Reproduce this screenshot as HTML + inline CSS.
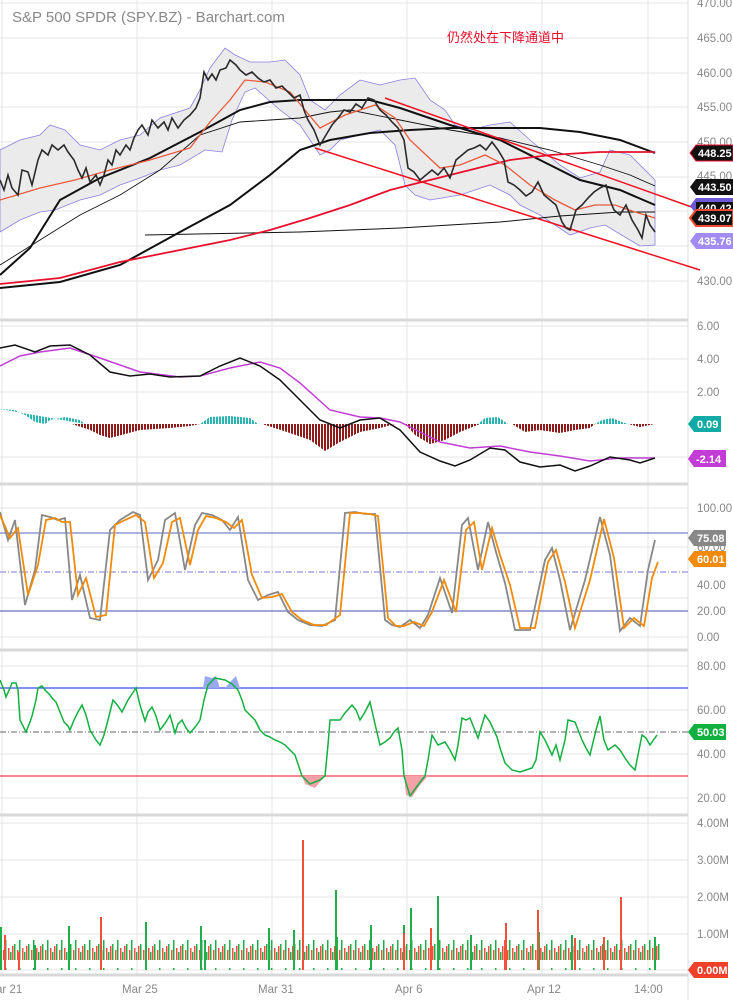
<!DOCTYPE html><html><head><meta charset="utf-8"><style>
body{margin:0;background:#fff;width:733px;height:1000px;overflow:hidden;font-family:"Liberation Sans","Noto Sans CJK SC",sans-serif}
svg{position:absolute;left:0;top:0}
.ax{font-size:11.5px;fill:#888;font-family:"Liberation Sans",sans-serif}
.tg{font-size:11px;font-weight:bold;fill:#fff;font-family:"Liberation Sans",sans-serif}
</style></head><body>
<svg width="733" height="1000" viewBox="0 0 733 1000">
<defs>
<pattern id="vol" x="0" y="0" width="14" height="30" patternUnits="userSpaceOnUse">
<rect x="0" y="14" width="1.5" height="16" fill="#1fae4a"/><rect x="3" y="20" width="1.5" height="10" fill="#f2503a"/><rect x="5" y="8" width="1.5" height="22" fill="#1fae4a"/><rect x="8" y="18" width="1.5" height="12" fill="#f2503a"/><rect x="10" y="22" width="1.5" height="8" fill="#1fae4a"/><rect x="12" y="16" width="1.5" height="14" fill="#f2503a"/>
</pattern>
<pattern id="hist" width="3" height="10" patternUnits="userSpaceOnUse"><rect width="2" height="10" fill="#8e1a1a"/></pattern>
<pattern id="histg" width="3" height="10" patternUnits="userSpaceOnUse"><rect width="2" height="10" fill="#2ab5b0"/></pattern>
</defs>
<g stroke="#e4e4e4" stroke-width="1">
<line x1="2" y1="0" x2="2" y2="975"/><line x1="137" y1="0" x2="137" y2="975"/><line x1="272" y1="0" x2="272" y2="975"/><line x1="407" y1="0" x2="407" y2="975"/><line x1="542" y1="0" x2="542" y2="975"/><line x1="648" y1="0" x2="648" y2="975"/>
<line x1="0" y1="3" x2="688" y2="3"/><line x1="0" y1="38" x2="688" y2="38"/><line x1="0" y1="73" x2="688" y2="73"/><line x1="0" y1="107" x2="688" y2="107"/><line x1="0" y1="142" x2="688" y2="142"/><line x1="0" y1="177" x2="688" y2="177"/><line x1="0" y1="211" x2="688" y2="211"/><line x1="0" y1="246" x2="688" y2="246"/><line x1="0" y1="281" x2="688" y2="281"/>
<line x1="0" y1="326" x2="688" y2="326"/><line x1="0" y1="359" x2="688" y2="359"/><line x1="0" y1="392" x2="688" y2="392"/><line x1="0" y1="457" x2="688" y2="457"/>
<line x1="0" y1="508" x2="688" y2="508"/><line x1="0" y1="547" x2="688" y2="547"/><line x1="0" y1="598" x2="688" y2="598"/><line x1="0" y1="637" x2="688" y2="637"/>
<line x1="0" y1="666" x2="688" y2="666"/><line x1="0" y1="710" x2="688" y2="710"/><line x1="0" y1="754" x2="688" y2="754"/><line x1="0" y1="798" x2="688" y2="798"/>
<line x1="0" y1="823" x2="688" y2="823"/><line x1="0" y1="860" x2="688" y2="860"/><line x1="0" y1="897" x2="688" y2="897"/><line x1="0" y1="934" x2="688" y2="934"/><line x1="0" y1="970" x2="688" y2="970"/>
</g>
<g stroke="#d8d8d8" stroke-width="3"><line x1="0" y1="320" x2="688" y2="320"/><line x1="0" y1="484" x2="688" y2="484"/><line x1="0" y1="650" x2="688" y2="650"/><line x1="0" y1="815" x2="688" y2="815"/><line x1="0" y1="975" x2="688" y2="975"/></g>
<line x1="688" y1="0" x2="688" y2="1000" stroke="#ddd"/>
<!-- price panel -->
<polygon fill="#ebebeb" stroke="#8a80e0" stroke-width="0.8" points="0,150 20,140 40,135 50,125 65,130 80,145 100,150 120,140 140,135 160,118 190,108 200,90 210,68 225,48 235,55 250,62 270,62 285,60 300,75 310,100 325,110 340,95 360,80 380,85 400,80 415,78 430,100 445,110 455,125 470,130 490,125 510,122 530,140 560,165 580,178 600,172 610,150 630,155 655,180 655,245 640,246 630,240 605,225 590,228 570,235 540,215 520,205 510,195 490,185 460,195 430,200 415,195 405,185 395,145 380,130 360,135 340,140 330,150 320,155 300,125 280,110 255,88 245,92 232,120 222,152 205,150 180,165 160,170 140,178 120,185 100,195 80,200 55,210 40,212 20,220 0,232"/>
<polyline fill="none" stroke="#111" stroke-width="1" points="145,235 300,232 400,228 500,222 560,216 620,212 655,212"/>
<polyline fill="none" stroke="#111" stroke-width="0.9" points="0,265 40,240 80,215 120,195 160,170 200,135 240,122 270,120 300,118 330,112 350,110 400,120 450,130 500,138 550,150 600,165 630,175 655,186"/>
<polyline fill="none" stroke="#111" stroke-width="2" points="0,275 30,248 60,200 100,178 150,158 200,132 240,110 270,102 300,100 340,100 370,100 400,108 450,125 500,140 540,160 580,180 620,190 655,205"/>
<polyline fill="none" stroke="#111" stroke-width="2" points="0,288 60,282 120,265 180,232 230,205 270,175 300,150 330,140 370,133 410,130 450,128 500,128 540,128 580,132 620,140 655,153"/>
<polyline fill="none" stroke="#e8102c" stroke-width="1.8" points="0,284 60,278 120,262 180,250 230,240 270,230 310,218 350,205 390,190 430,180 470,170 510,160 550,155 600,152 655,152"/>
<line x1="315" y1="148" x2="700" y2="270" stroke="#f01020" stroke-width="1.5"/>
<line x1="385" y1="98" x2="700" y2="210" stroke="#f01020" stroke-width="1.5"/>
<polyline fill="none" stroke="#e85a3a" stroke-width="1.3" points="0,200 40,188 75,180 110,170 150,160 190,148 210,122 230,100 245,80 265,82 290,92 305,110 320,128 345,115 375,105 395,118 410,140 440,168 460,165 485,155 505,165 530,185 555,200 575,210 595,205 615,205 635,212 655,218"/>
<polyline fill="none" stroke="#2a2a2a" stroke-width="1.6" points="0,180 4,190 8,175 12,188 18,195 22,170 28,172 32,185 38,160 42,150 48,155 52,145 58,150 64,145 68,152 74,160 78,170 82,178 86,168 90,182 96,175 100,185 104,175 108,160 112,165 116,150 120,155 126,145 130,150 134,138 138,130 142,125 148,135 152,120 158,128 164,122 168,130 172,118 178,128 184,120 190,115 196,108 200,98 204,72 208,80 212,74 216,80 220,70 226,68 230,60 236,65 240,70 246,75 252,72 258,78 264,82 270,80 276,88 282,86 288,92 294,98 300,95 304,110 308,120 314,130 320,145 326,135 332,125 338,118 344,110 350,112 356,104 362,108 368,98 374,100 380,110 386,115 392,122 398,128 404,140 408,168 414,172 420,180 426,175 432,170 438,175 444,168 450,178 456,160 462,155 468,150 474,148 480,145 486,150 492,142 498,150 504,160 508,182 514,185 520,190 526,196 532,192 538,182 544,195 550,200 556,205 562,222 566,228 570,230 576,210 582,205 588,198 594,192 600,188 606,185 610,200 614,210 620,215 626,205 632,220 638,230 642,238 646,215 650,225 655,232"/>
<!-- macd -->
<polygon fill="url(#histg)" points="0,409 15,410 25,415 35,422 45,424 50,420 65,417 80,420 85,424"/>
<polygon fill="url(#histg)" points="200,424 210,417 230,416 250,418 258,424"/>
<polygon fill="url(#histg)" points="478,424 485,418 498,417 508,424"/>
<polygon fill="url(#histg)" points="595,424 602,420 612,418 622,422 628,424"/>
<polygon fill="url(#hist)" points="72,424 90,430 100,435 110,438 125,434 140,430 170,428 190,426 200,424"/>
<polygon fill="url(#hist)" points="262,424 290,433 310,440 325,451 340,442 360,432 380,428 395,424"/>
<polygon fill="url(#hist)" points="405,424 415,435 430,444 445,440 460,432 470,428 480,424"/>
<polygon fill="url(#hist)" points="512,424 525,432 540,430 560,433 575,430 590,428 595,424"/>
<polygon fill="url(#hist)" points="628,424 640,427 655,424"/>
<polyline fill="none" stroke="#c23cd6" stroke-width="1.5" points="0,366 20,356 40,352 70,348 100,358 140,372 180,377 200,376 230,368 260,362 280,368 300,383 330,410 360,417 380,418 400,422 420,432 440,442 470,448 500,446 530,452 560,456 590,461 620,458 655,458"/>
<polyline fill="none" stroke="#111" stroke-width="1.5" points="0,348 15,345 35,352 50,346 70,345 90,355 110,372 130,376 150,374 170,377 200,376 220,366 240,358 260,366 280,380 300,400 320,420 340,428 360,420 380,418 400,430 420,452 440,461 455,466 470,460 490,448 505,450 520,462 540,467 560,465 575,471 590,466 610,457 630,460 640,463 655,458"/>
<!-- stoch -->
<line x1="0" y1="533" x2="688" y2="533" stroke="#8e98d8" stroke-width="1.5"/>
<line x1="0" y1="611" x2="688" y2="611" stroke="#6870c8" stroke-width="1.2"/>
<line x1="0" y1="572" x2="688" y2="572" stroke="#7a7ae0" stroke-dasharray="6 2 1 2"/>
<polyline fill="none" stroke="#888" stroke-width="1.8" points="0,512 8,540 15,520 25,605 35,570 42,515 50,517 58,520 65,518 72,600 80,575 90,618 100,620 110,530 120,520 133,512 140,515 148,580 158,560 165,520 175,513 185,570 195,525 202,513 212,515 222,520 230,530 238,517 248,580 258,600 268,595 278,592 288,612 298,620 310,625 322,626 335,620 345,513 355,512 365,514 375,514 385,620 392,625 400,627 410,620 420,628 428,615 440,578 452,613 462,525 468,518 478,570 488,522 496,552 505,583 515,630 530,630 545,560 552,548 560,580 570,630 585,580 600,517 610,555 620,631 630,618 640,626 648,570 655,540"/>
<polyline fill="none" stroke="#f28a0a" stroke-width="1.8" points="0,515 10,538 18,528 28,595 38,565 46,520 55,518 62,522 70,522 78,595 86,578 96,617 106,615 115,525 125,520 136,515 145,522 154,578 163,563 172,522 180,518 190,565 198,530 206,516 216,518 226,522 234,528 242,520 252,575 262,598 272,597 282,594 292,612 302,620 314,625 326,625 340,615 350,513 360,513 370,514 378,516 388,618 396,626 404,626 414,622 424,626 432,612 444,580 456,612 466,530 474,522 482,570 492,528 500,555 510,585 520,628 535,628 548,562 556,550 565,582 575,628 590,580 604,519 614,558 624,628 634,618 644,626 652,578 658,562"/>
<!-- rsi -->
<line x1="0" y1="688" x2="688" y2="688" stroke="#3550f0" stroke-width="1.2"/>
<line x1="0" y1="776" x2="688" y2="776" stroke="#f04050" stroke-width="1.2"/>
<line x1="0" y1="732" x2="688" y2="732" stroke="#333" stroke-dasharray="6 2 1 2" stroke-width="0.8"/>
<polygon fill="#9aa8f0" points="203,688 205,676 212,678 216,676 220,688 225,688 232,680 236,676 240,688"/>
<polygon fill="#f6a0a8" points="302,776 305,784 315,788 325,776"/>
<polygon fill="#f6a0a8" points="404,776 406,795 412,797 420,785 428,776"/>
<polyline fill="none" stroke="#12b040" stroke-width="1.5" points="0,680 4,690 6,697 10,688 12,683 16,683 18,690 20,720 24,728 26,732 30,722 32,716 36,700 38,688 42,686 45,690 50,695 52,698 56,702 60,712 64,722 68,726 70,730 74,720 78,712 82,705 86,715 90,730 96,740 100,745 104,735 108,720 113,700 118,706 122,712 128,700 132,694 136,688 140,705 145,721 148,712 152,707 156,716 160,730 166,722 170,715 175,733 178,724 182,720 186,728 190,733 196,726 200,720 204,700 208,685 215,678 225,680 232,684 238,690 242,700 245,710 250,715 255,720 260,730 265,735 270,737 275,740 280,742 285,745 290,750 295,755 300,770 302,776 310,784 320,780 325,776 328,745 330,720 335,720 340,720 345,713 352,705 356,710 360,720 365,712 370,702 375,724 380,745 385,742 390,738 394,732 398,728 402,750 404,776 410,796 418,785 425,776 428,760 432,735 438,745 445,742 450,750 455,760 458,745 462,718 466,720 470,718 474,728 478,738 485,715 490,722 497,737 500,748 505,763 512,770 520,772 526,770 532,768 536,760 540,732 545,740 552,755 556,745 560,760 565,740 568,720 575,722 582,740 586,748 590,755 596,730 600,716 604,740 608,750 615,745 620,750 625,758 630,765 635,770 638,755 642,735 646,738 650,745 657,735"/>
<!-- volume -->
<rect x="0" y="940" width="660" height="30" fill="url(#vol)"/>
<g fill="#1fae4a">
<rect x="0" y="927" width="2" height="43"/><rect x="34" y="945" width="2" height="25"/><rect x="68" y="926" width="2" height="44"/><rect x="145" y="922" width="2" height="48"/><rect x="204" y="940" width="2" height="30"/><rect x="268" y="928" width="2" height="42"/><rect x="336" y="937" width="2" height="33"/><rect x="403" y="925" width="2" height="45"/><rect x="410" y="908" width="2" height="62"/><rect x="470" y="935" width="2" height="35"/><rect x="538" y="932" width="2" height="38"/><rect x="335" y="890" width="2" height="80"/><rect x="437" y="896" width="2" height="74"/><rect x="370" y="925" width="2" height="45"/><rect x="571" y="935" width="2" height="35"/><rect x="654" y="937" width="2" height="33"/><rect x="200" y="926" width="2" height="44"/><rect x="293" y="930" width="2" height="40"/>
</g>
<g fill="#f2503a">
<rect x="4" y="935" width="2" height="35"/><rect x="18" y="952" width="2" height="18"/><rect x="100" y="917" width="2" height="53"/><rect x="302" y="840" width="2" height="130"/><rect x="403" y="933" width="2" height="37"/><rect x="430" y="946" width="2" height="24"/><rect x="504" y="940" width="2" height="30"/><rect x="537" y="910" width="2" height="60"/><rect x="603" y="937" width="2" height="33"/><rect x="620" y="897" width="2" height="73"/><rect x="430" y="928" width="2" height="42"/><rect x="505" y="923" width="2" height="47"/><rect x="574" y="938" width="2" height="32"/>
</g>
<!-- axis labels -->
<g class="ax" text-anchor="start">
<text x="697" y="7">470.00</text><text x="697" y="42">465.00</text><text x="697" y="77">460.00</text><text x="697" y="111">455.00</text><text x="697" y="146">450.00</text><text x="697" y="180">445.00</text><text x="697" y="285">430.00</text>
<text x="697" y="330">6.00</text><text x="697" y="363">4.00</text><text x="697" y="396">2.00</text>
<text x="697" y="512">100.00</text><text x="697" y="551">60.00</text><text x="697" y="589">40.00</text><text x="697" y="615">20.00</text><text x="697" y="641">0.00</text>
<text x="697" y="670">80.00</text><text x="697" y="714">60.00</text><text x="697" y="758">40.00</text><text x="697" y="802">20.00</text>
<text x="697" y="827">4.00M</text><text x="697" y="864">3.00M</text><text x="697" y="901">2.00M</text><text x="697" y="938">1.00M</text>
</g>
<g class="ax" font-size="12"><text x="-4" y="993">ar 21</text><text x="122" y="993">Mar 25</text><text x="258" y="993">Mar 31</text><text x="395" y="993">Apr 6</text><text x="527" y="993">Apr 12</text><text x="634" y="993">14:00</text></g>
<!-- tags -->
<polygon fill="#111" stroke="#e8102c" points="690,153 696,145 733,145 733,161 696,161"/><text class="tg" x="698" y="157">448.25</text>
<polygon fill="#111" points="690,187 696,179 733,179 733,195 696,195"/><text class="tg" x="698" y="191">443.50</text>
<polygon fill="#6a58d8" points="690,206 696,198 733,198 733,214 696,214"/><polygon fill="#111" points="696,202 733,202 733,212 696,212"/><text class="tg" x="698" y="212">440.42</text>
<polygon fill="#111" stroke="#f04a30" stroke-width="2" points="690,218 696,210 733,210 733,226 696,226"/><text class="tg" x="698" y="222">439.07</text>
<polygon fill="#a28cf4" points="690,241 696,233 733,233 733,249 696,249"/><text class="tg" x="698" y="245">435.76</text>
<polygon fill="#12aaa5" points="688,424 694,416 721,416 721,432 694,432"/><text class="tg" x="697" y="428">0.09</text>
<polygon fill="#c23cd6" points="688,459 694,450 726,450 726,467 694,467"/><text class="tg" x="696" y="463">-2.14</text>
<polygon fill="#888" points="688,538 694,530 726,530 726,546 694,546"/><text class="tg" x="697" y="542">75.08</text>
<polygon fill="#f28a0a" points="688,559 694,551 726,551 726,567 694,567"/><text class="tg" x="697" y="563">60.01</text>
<polygon fill="#12b040" points="688,732 694,724 726,724 726,740 694,740"/><text class="tg" x="697" y="736">50.03</text>
<polygon fill="#f0402a" points="688,970 694,962 728,962 728,978 694,978"/><text class="tg" x="697" y="974">0.00M</text>
</svg>
<div style="position:absolute;left:12px;top:9px;font-size:15px;color:#888">S&amp;P 500 SPDR (SPY.BZ) - Barchart.com</div>
<div style="position:absolute;left:447px;top:27px;font-size:13px;color:#e8102c;font-family:'Liberation Sans','Noto Sans CJK SC',sans-serif">仍然处在下降通道中</div>
</body></html>
